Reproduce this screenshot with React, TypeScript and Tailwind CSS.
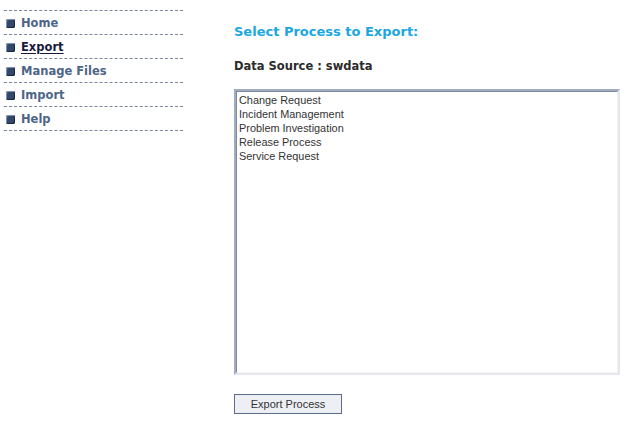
import React, { useState } from 'react';

const menu = ['Home', 'Export', 'Manage Files', 'Import', 'Help'];
const processes = [
  'Change Request',
  'Incident Management',
  'Problem Investigation',
  'Release Process',
  'Service Request',
];

const Bullet: React.FC = () => (
  <span className="w-[9px] h-[9px] rounded-[2px] bg-[#34486a] shadow-[inset_1px_1px_0_#7d90ae,inset_-1px_-1px_0_#1a2538] shrink-0" />
);

const App: React.FC = () => {
  const [active] = useState('Export');

  return (
    <div className="w-[632px] h-[425px] bg-white flex font-['DejaVu_Sans',Verdana,sans-serif]">
      <aside className="w-[179px] shrink-0 ml-[4px] pt-[10px]">
        <div className="border-t border-dashed border-[#7a869c]" />
        {menu.map(item => (
          <div key={item} className="h-[24px] flex items-center gap-[6px] pl-[2px] pt-[2px] border-b border-dashed border-[#7a869c]">
            <Bullet />
            <span
              className={`text-[11.5px] font-bold ${
                item === active ? 'text-[#1c1a3c] underline underline-offset-2' : 'text-[#4d6587]'
              }`}
            >
              {item}
            </span>
          </div>
        ))}
      </aside>

      <main className="ml-[51px] pt-[24px] flex flex-col">
        <h1 className="text-[13px] font-bold text-[#1ba7e0] leading-[16px]">Select Process to Export:</h1>
        <p className="mt-[19px] text-[11.5px] font-bold text-[#2b2b2b] leading-[14px]">Data Source : swdata</p>

        <div className="mt-[16px] w-[386px] h-[286px] border-2 border-t-[#a3acbd] border-l-[#a3acbd] border-r-[#e6e6ef] border-b-[#e6e6ef] bg-white">
          <ul className="h-full border border-t-[#7d8aa2] border-l-[#7d8aa2] border-r-[#f2f2f7] border-b-[#f2f2f7] pt-[1px] pl-[2px] font-['Liberation_Sans',Arial,sans-serif] text-[10.9px] leading-[14px] text-[#333]">
            {processes.map(p => (
              <li key={p}>{p}</li>
            ))}
          </ul>
        </div>

        <button className="mt-[19px] w-[108px] h-[20px] bg-[#eeeef5] border border-[#587090] font-['Liberation_Sans',Arial,sans-serif] text-[11px] text-[#333] leading-none">
          Export Process
        </button>
      </main>
    </div>
  );
};

export default App;
